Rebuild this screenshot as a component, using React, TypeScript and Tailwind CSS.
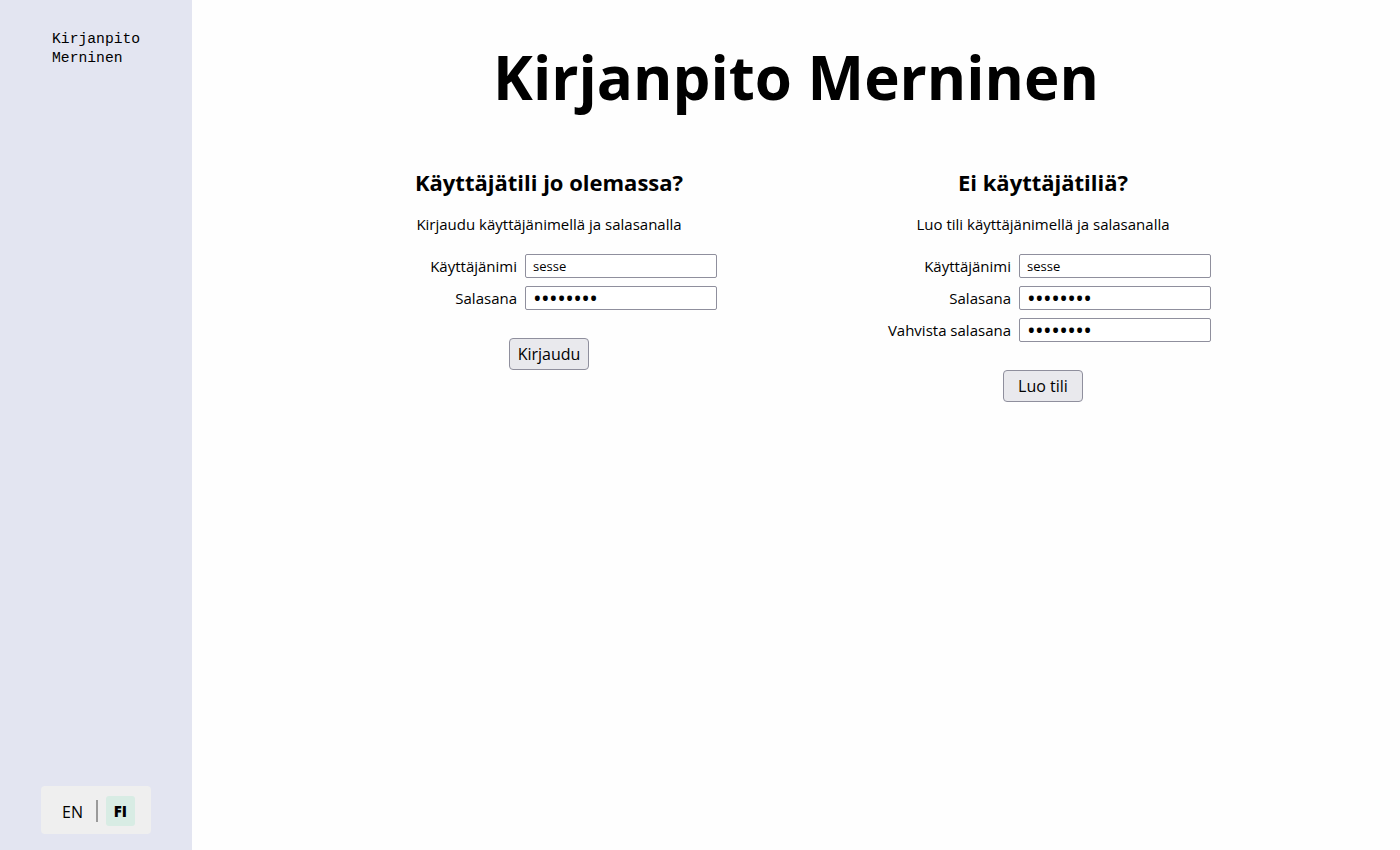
import React, { useState } from "react";

const sans = "font-['Open_Sans','Noto_Sans',sans-serif]";

type Field = { label: string; type: "text" | "password"; value: string };

const FormRow = ({ field }: { field: Field }) => (
  <div className="flex items-center h-[24px] mb-[8px]">
    <label className="w-[223px] pr-[8px] text-right text-[15px] text-black">
      {field.label}
    </label>
    <input
      type={field.type}
      defaultValue={field.value}
      className={`w-[192px] h-[24px] px-[7px] py-0 border border-[#8f8f9d] rounded-[2px] bg-white text-black outline-none ${
        field.type === "password" ? "text-[23px] leading-[22px] tracking-[-0.6px]" : "text-[13px]"
      }`}
    />
  </div>
);

const AuthForm = ({
  title,
  subtitle,
  fields,
  button,
}: {
  title: string;
  subtitle: string;
  fields: Field[];
  button: string;
}) => (
  <div className="flex flex-col">
    <h2 className="text-center text-[22px] font-bold leading-[30px] mt-[167px] text-black">
      {title}
    </h2>
    <p className="text-center text-[15px] leading-[20px] mt-[17px] text-black">
      {subtitle}
    </p>
    <div className="mt-[20px]">
      {fields.map((f) => (
        <FormRow key={f.label} field={f} />
      ))}
    </div>
    <div className="flex justify-center mt-[20px]">
      <button className="w-[80px] h-[32px] bg-[#e9e9ed] border border-[#8f8f9d] rounded-[4px] text-[16px] text-black">
        {button}
      </button>
    </div>
  </div>
);

export default function App() {
  const [lang, setLang] = useState("FI");

  return (
    <div className={`flex w-full h-[850px] ${sans}`}>
      <aside className="w-[192px] shrink-0 bg-[#e3e5f1] flex flex-col">
        <div className="pl-[52px] pt-[30px] font-['Liberation_Mono',monospace] text-[14.7px] leading-[19px] text-black">
          Kirjanpito
          <br />
          Merninen
        </div>
        <div className="mt-auto mb-[16px] ml-[41px] w-[110px] h-[48px] bg-[#efefef] rounded-[4px] flex items-center pl-[21px] pt-[1px]">
          <button
            onClick={() => setLang("EN")}
            className={`text-[16px] h-[30px] pt-[2px] ${lang === "EN" ? "font-bold" : ""}`}
          >
            EN
          </button>
          <span className="ml-[13px] mr-[8px] w-[2px] h-[22px] bg-[#9a9a9a]" />
          <button
            onClick={() => setLang("FI")}
            className={`text-[15px] h-[30px] w-[29px] pt-[2px] rounded-[3px] ${
              lang === "FI" ? "font-extrabold bg-[#d8ece4]" : ""
            }`}
          >
            FI
          </button>
        </div>
      </aside>
      <main className="flex-1 bg-[#fefefe] relative">
        <h1 className="absolute left-0 right-0 top-[37px] text-center text-[60px] font-bold leading-[80px] text-black">
          Kirjanpito Merninen
        </h1>
        <div className="w-[988px] mx-auto grid grid-cols-2">
          <AuthForm
            title="Käyttäjätili jo olemassa?"
            subtitle="Kirjaudu käyttäjänimellä ja salasanalla"
            fields={[
              { label: "Käyttäjänimi", type: "text", value: "sesse" },
              { label: "Salasana", type: "password", value: "salasana" },
            ]}
            button="Kirjaudu"
          />
          <AuthForm
            title="Ei käyttäjätiliä?"
            subtitle="Luo tili käyttäjänimellä ja salasanalla"
            fields={[
              { label: "Käyttäjänimi", type: "text", value: "sesse" },
              { label: "Salasana", type: "password", value: "salasana" },
              { label: "Vahvista salasana", type: "password", value: "salasana" },
            ]}
            button="Luo tili"
          />
        </div>
      </main>
    </div>
  );
}
